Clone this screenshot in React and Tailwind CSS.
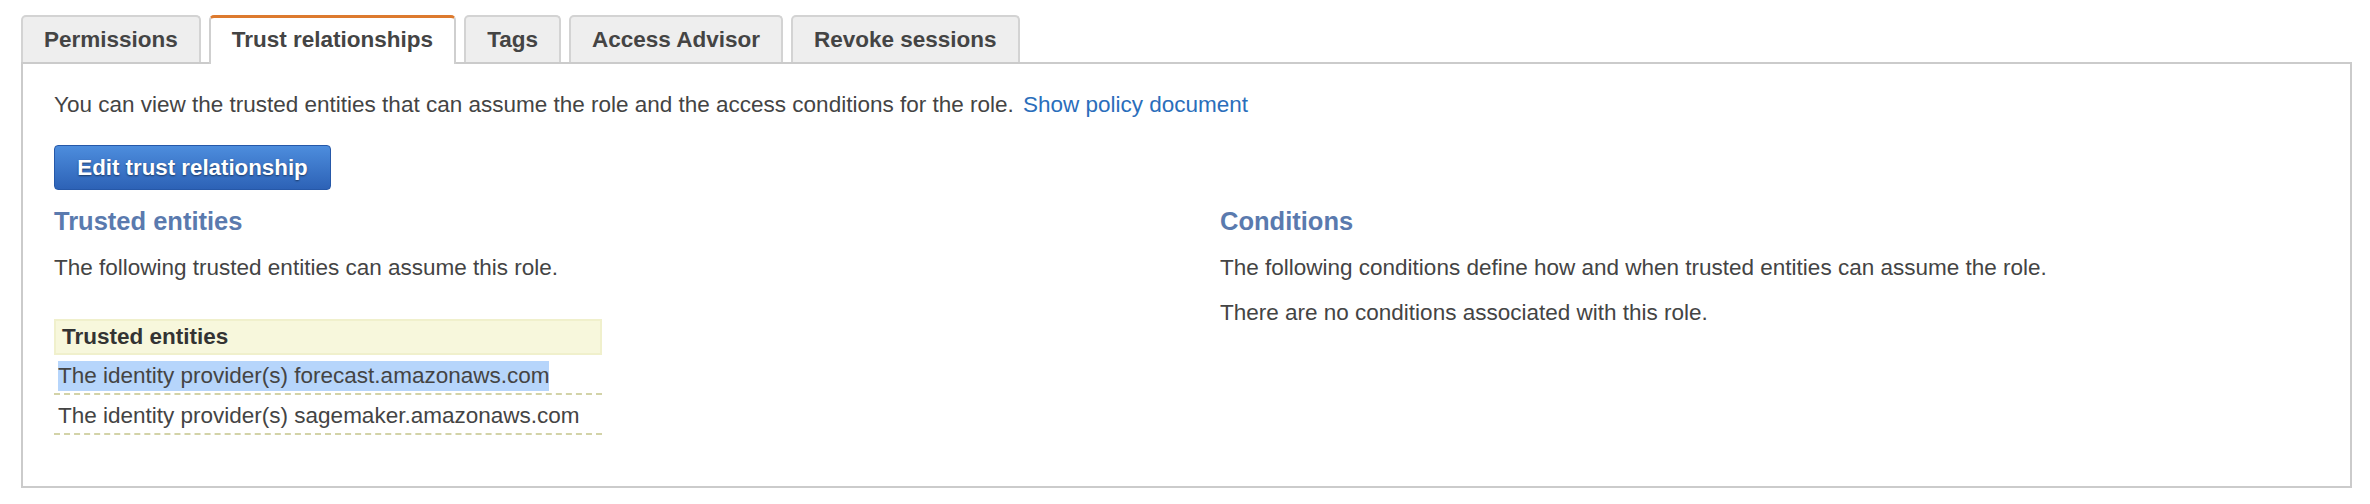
import React from 'react';

const tabs = ['Permissions', 'Trust relationships', 'Tags', 'Access Advisor', 'Revoke sessions'];

const entities = [
  { id: 1, text: 'The identity provider(s) forecast.amazonaws.com', selected: true },
  { id: 2, text: 'The identity provider(s) sagemaker.amazonaws.com', selected: false },
];

const Tab = ({ label, active }) => (
  <div
    className={
      active
        ? 'relative z-10 -mb-[2px] flex h-[49px] items-center rounded-t-[5px] border-2 border-b-0 border-[#cfcfcf] border-t-[3px] border-t-[#dd7a2e] bg-white px-[21px] pb-[2px]'
        : 'flex h-[47px] items-center rounded-t-[5px] border-2 border-b-0 border-[#d3d3d3] bg-[#eeeeee] px-[21px]'
    }
  >
    <span className="text-[22.5px] font-bold text-[#444444]">{label}</span>
  </div>
);

const App = () => {
  return (
    <div className="min-h-[504px] bg-white pl-[21px] pr-[18px] pt-[15px] font-['Liberation_Sans',Helvetica,Arial,sans-serif] text-[#444444]">
      <div className="flex items-end gap-[8px]">
        {tabs.map((t) => (
          <Tab key={t} label={t} active={t === 'Trust relationships'} />
        ))}
      </div>

      <div className="border-2 border-[#cbcbcb] px-[31px] pb-[51px] pt-[27px]">
        <p className="text-[22.5px] leading-[28px]">
          You can view the trusted entities that can assume the role and the access conditions for the role.{' '}
          <a className="ml-[3px] text-[#2a6ebb]">Show policy document</a>
        </p>

        <button className="mt-[26px] h-[45px] w-[277px] rounded-[4px] border border-[#2658a8] bg-gradient-to-b from-[#4d8ddd] to-[#2d62b6] text-[22.3px] font-bold text-white [text-shadow:0_1px_2px_rgba(0,0,0,0.5)]">
          Edit trust relationship
        </button>

        <div className="mt-[16px] flex">
          <div className="w-[1166px]">
            <h3 className="text-[25.5px] font-bold leading-[30px] text-[#5a7aae]">Trusted entities</h3>
            <p className="mt-[18px] text-[22.5px] leading-[28px]">
              The following trusted entities can assume this role.
            </p>

            <div className="mt-[37px] w-[548px]">
              <div className="flex h-[36px] items-center border-2 border-[#f0f0cc] bg-[#f7f7dc] px-[6px] text-[22.5px] font-bold text-[#333333]">
                Trusted entities
              </div>
              {entities.map((e) => (
                <div
                  key={e.id}
                  className="flex h-[40px] items-center border-b-2 border-dashed border-[#d3d3a8] px-[4px] pt-[4px] text-[22.5px]"
                >
                  <span className={e.selected ? 'bg-[#b6d5fb] leading-[30px]' : 'leading-[30px]'}>{e.text}</span>
                </div>
              ))}
            </div>
          </div>

          <div className="flex-1">
            <h3 className="text-[25.5px] font-bold leading-[30px] text-[#5a7aae]">Conditions</h3>
            <p className="mt-[18px] text-[22.5px] leading-[28px]">
              The following conditions define how and when trusted entities can assume the role.
            </p>
            <p className="mt-[17px] text-[22.5px] leading-[28px]">
              There are no conditions associated with this role.
            </p>
          </div>
        </div>
      </div>
    </div>
  );
};

export default App;
